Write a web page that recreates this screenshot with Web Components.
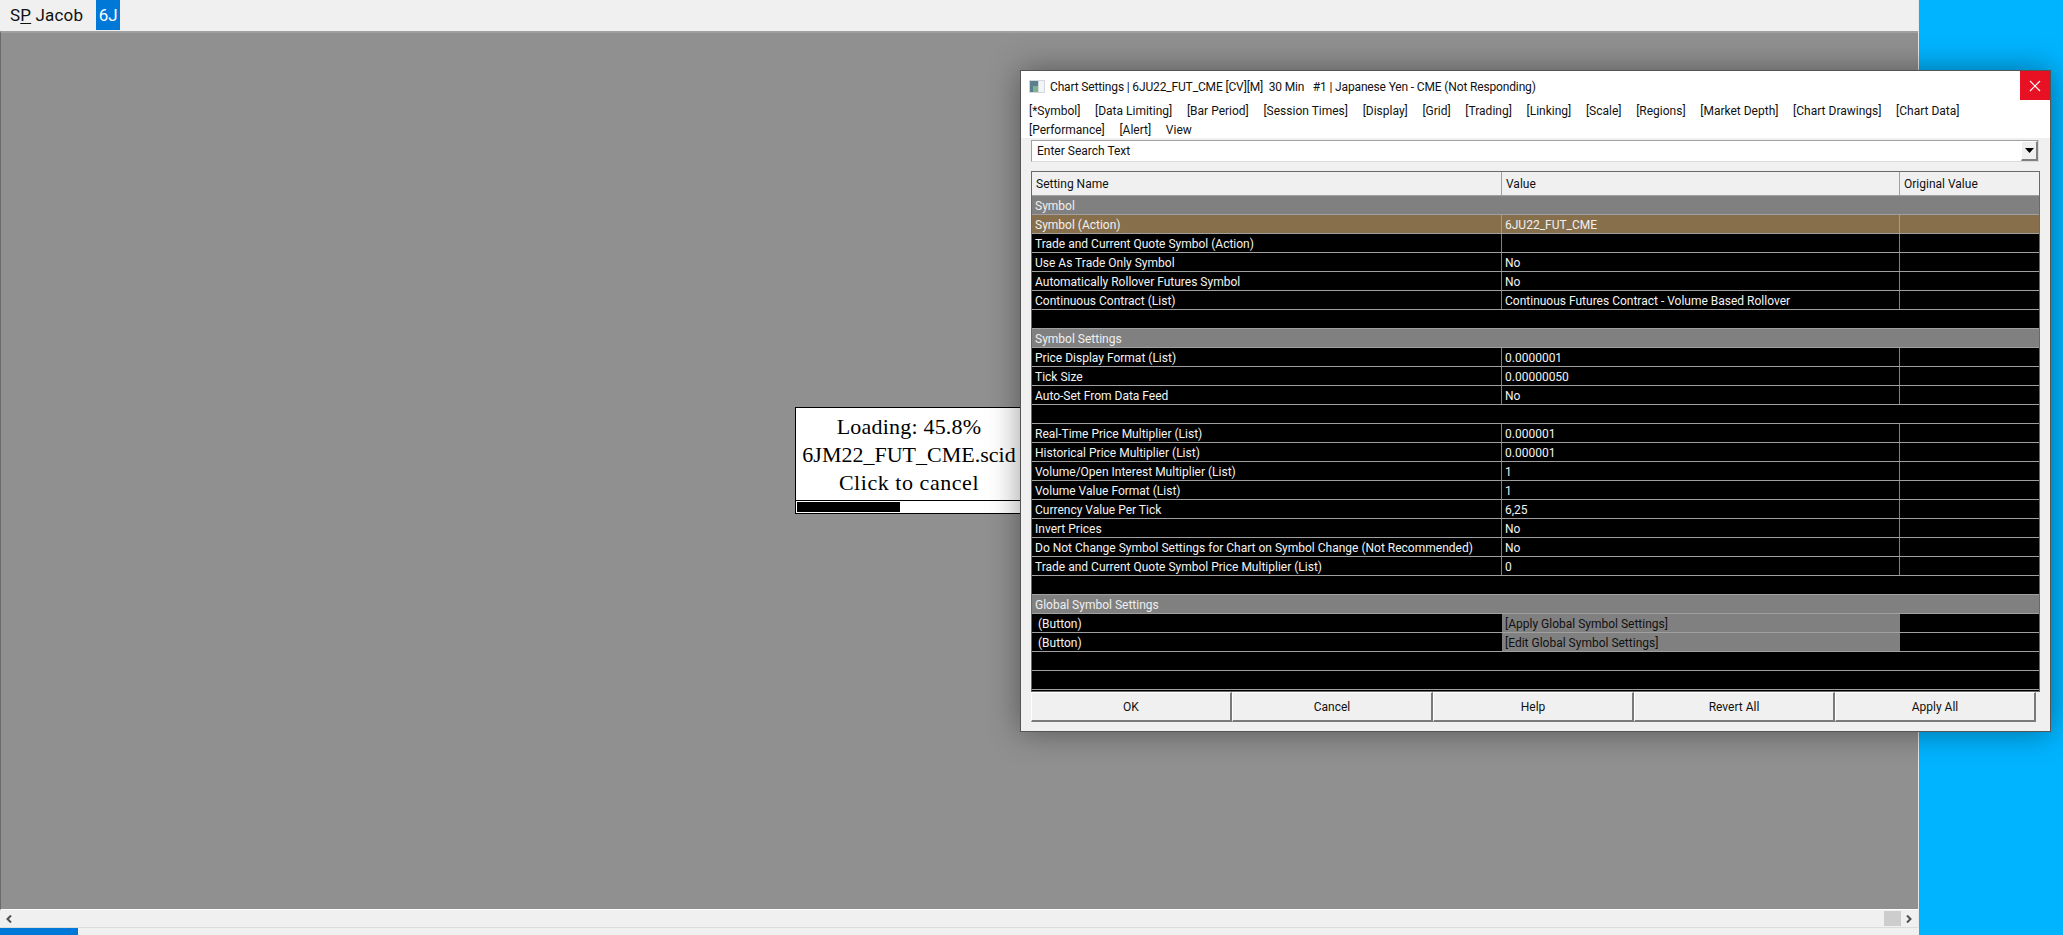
<!DOCTYPE html>
<html>
<head>
<meta charset="utf-8">
<title>Chart Settings</title>
<style>
  html, body { margin: 0; height: 100%; overflow: hidden; background: #00b4ff; }
  body { font-family: Roboto, sans-serif; font-size: 12px; }
</style>
</head>
<body>

<app-shell>
  <tab-bar slot="tabs"></tab-bar>
  <loading-box slot="windows" percent="45.8" file="6JM22_FUT_CME.scid"></loading-box>
  <chart-settings slot="windows"></chart-settings>
</app-shell>

<script>
// Desktop: main window on the left, blue wallpaper on the right, strip along the bottom.
class AppShell extends HTMLElement {
  constructor() {
    super();
    this.attachShadow({ mode: 'open' });
    this.shadowRoot.innerHTML = `
      <style>
        :host { display: block; position: relative; width: 2063px; height: 935px; overflow: hidden; background: #00b4ff; }
        .main { display: flex; flex-direction: column; width: 1919px; height: 928px; background: #f0f0f0; border-right: 1px solid #e8e8e8; box-sizing: border-box; }
        .chart { flex: 1; background: #909090; border-top: 2px solid #a0a0a0; border-left: 1px solid #6a6a6a; border-bottom: 1px solid #fff; }
        .scroll { display: flex; align-items: center; justify-content: space-between; height: 17px; padding: 0 5px; border-bottom: 1px solid #dcdcdc; }
        .thumb { width: 17px; height: 15px; background: #cdcdcd; margin-left: auto; margin-right: 4px; }
        .scroll svg { display: block; width: 8px; height: 8px; }
        .task { position: absolute; left: 0; right: 144px; bottom: 0; height: 7px; background: #f0f0f0; }
        .task i { display: block; width: 78px; height: 7px; background: #0078d7; }
      </style>
      <div class="main">
        <slot name="tabs"></slot>
        <div class="chart"></div>
        <div class="scroll">
          <svg viewBox="0 0 8 8"><path d="M6 0.5 L2.5 4 L6 7.5" fill="none" stroke="#505050" stroke-width="2"/></svg>
          <div class="thumb"></div>
          <svg viewBox="0 0 8 8"><path d="M2 0.5 L5.5 4 L2 7.5" fill="none" stroke="#505050" stroke-width="2"/></svg>
        </div>
      </div>
      <div class="task"><i></i></div>
      <slot name="windows"></slot>
    `;
  }
}

class TabBar extends HTMLElement {
  constructor() {
    super();
    this.attachShadow({ mode: 'open' });
    this.shadowRoot.innerHTML = `
      <style>
        :host { display: flex; height: 31px; background: #f0f0f0; font: 17px Roboto, sans-serif; color: #111; }
        .tab { display: flex; align-items: center; height: 30px; box-sizing: border-box; }
        .name { padding: 0 13px 0 10px; letter-spacing: .16px; }
        u { text-underline-offset: 2px; text-decoration-thickness: 1px; }
        .active { width: 24px; justify-content: center; background: #0078d7; color: #fff; }
      </style>
      <div class="tab name">S<u>P</u>&nbsp;Jacob</div>
      <div class="tab active">6J</div>
    `;
  }
}

// Small window over the chart, the settings dialog covers its right edge.
class LoadingBox extends HTMLElement {
  constructor() {
    super();
    this.attachShadow({ mode: 'open' });
  }
  connectedCallback() {
    const pct = this.getAttribute('percent');
    this.shadowRoot.innerHTML = `
      <style>
        :host { display: block; position: absolute; left: 795px; top: 407px; width: 228px; background: #fff; border: 1px solid #000; box-sizing: border-box; font: 22px/28px "Liberation Serif", serif; color: #000; text-align: center; }
        .text { padding: 5px 0 3px; }
        .l1 { letter-spacing: .2px; }
        .l3 { letter-spacing: .55px; }
        .bar { border-top: 1px solid #000; padding: 1px; height: 10px; }
        .bar div { height: 10px; width: ${pct}%; background: #000; }
      </style>
      <div class="text"><span class="l1">Loading: ${pct}%</span><br>${this.getAttribute('file')}<br><span class="l3">Click to cancel</span></div>
      <div class="bar"><div></div></div>
    `;
  }
}

class SettingsRow extends HTMLElement {
  constructor() {
    super();
    this.attachShadow({ mode: 'open' });
  }
  connectedCallback() {
    const name = this.getAttribute('name') || '';
    const value = this.getAttribute('value') || '';
    this.shadowRoot.innerHTML = `
      <style>
        :host { display: grid; grid-template-columns: 470px 398px 1fr; height: 19px; box-sizing: border-box; border-bottom: 1px solid #a0a0a0; background: #000; color: #f4f4f4; }
        div { height: 18px; line-height: 20px; white-space: pre; overflow: hidden; padding-left: 3px; border-right: 1px solid #808080; }
        .orig { border-right: 0; }
        :host([type=section]) { background: #808080; color: #efefef; }
        :host([type=section]) div { border-right-color: #808080; overflow: visible; }
        :host([type=selected]) { background: #886f4c; color: #f0f0f0; }
        :host([type=selected]) div { border-right-color: #a89a85; }
        :host([type=button]) .name { padding-left: 6px; border-right: 0; }
        :host([type=button]) .value { background: #808080; color: #111; border-right: 0; }
        :host([type=blank]) div { border-right-color: #000; }
      </style>
      <div class="name">${name}</div><div class="value">${value}</div><div class="orig"></div>
    `;
  }
}

class SettingsGrid extends HTMLElement {
  constructor() {
    super();
    this.attachShadow({ mode: 'open' });
    this.shadowRoot.innerHTML = `
      <style>
        :host { display: block; border: 1px solid #696969; border-bottom: 0; margin-top: 9px; }
        .head { display: grid; grid-template-columns: 470px 398px 1fr; height: 24px; background: #f0f0f0; color: #111; line-height: 25px; box-sizing: border-box; border-bottom: 1px solid #a0a0a0; }
        .head div { height: 23px; padding-left: 4px; border-right: 1px solid #a0a0a0; }
        .head div:last-child { border-right: 0; }
        .rows { background: #000; height: 495px; border-bottom: 1px solid #696969; overflow: hidden; }
      </style>
      <div class="head"><div>Setting Name</div><div>Value</div><div>Original Value</div></div>
      <div class="rows"><slot></slot></div>
    `;
  }
}

class DialogButton extends HTMLElement {
  constructor() {
    super();
    this.attachShadow({ mode: 'open' });
    this.shadowRoot.innerHTML = `
      <style>
        :host { display: flex; align-items: center; justify-content: center; flex: 1; box-sizing: border-box; height: 30px; background: #f0f0f0; color: #111; border: 1px solid #fff; border-right: 2px solid #7a7a7a; border-bottom: 2px solid #7a7a7a; }
      </style>
      <slot></slot>
    `;
  }
}

class ChartSettings extends HTMLElement {
  constructor() {
    super();
    this.attachShadow({ mode: 'open' });
    const tabs1 = ['[*Symbol]', '[Data Limiting]', '[Bar Period]', '[Session Times]', '[Display]', '[Grid]', '[Trading]', '[Linking]', '[Scale]', '[Regions]', '[Market Depth]', '[Chart Drawings]', '[Chart Data]'];
    const tabs2 = ['[Performance]', '[Alert]', 'View'];
    const span = t => `<span>${t}</span>`;
    this.shadowRoot.innerHTML = `
      <style>
        :host { display: flex; flex-direction: column; position: absolute; left: 1020px; top: 70px; width: 1031px; height: 662px; box-sizing: border-box; background: #f0f0f0; border: 1px solid #555; box-shadow: 0 0 30px rgba(0,0,0,.4); color: #111; font: 12px Roboto, sans-serif; }
        .top { background: #fff; height: 67px; flex: none; }
        .title { display: flex; align-items: center; height: 29px; box-sizing: border-box; padding: 2px 0 0 8px; position: relative; }
        .title svg { display: block; margin-right: 5px; }
        .title span { white-space: pre; letter-spacing: -.15px; }
        .close { position: absolute; right: 0; top: 0; width: 30px; height: 29px; background: #e81123; display: flex; align-items: center; justify-content: center; }
        .tabs { display: flex; gap: 14.67px; height: 19px; line-height: 19px; padding-left: 8px; white-space: pre; }
        .tabs.first { padding-top: 2px; }
        .body { padding: 2px 10px 0 10px; }
        .search { display: flex; align-items: center; justify-content: space-between; height: 22px; margin-right: 1px; box-sizing: border-box; background: #fff; border: 1px solid #dcdcdc; border-top: 1px solid #a0a0a0; border-left: 1px solid #a0a0a0; padding-left: 5px; }
        .drop { width: 17px; height: 20px; box-sizing: border-box; background: #f0f0f0; border: 1px solid #fff; border-right: 2px solid #808080; border-bottom: 2px solid #808080; display: flex; align-items: center; justify-content: center; }
        .buttons { display: flex; width: 1005px; }
      </style>
      <div class="top">
        <div class="title">
          <svg width="16" height="13" viewBox="0 0 16 13">
            <rect x="0" y="0" width="16" height="13" fill="#d4d8dc"/>
            <rect x="1" y="1" width="8" height="11" fill="#5a7f8f"/>
            <rect x="4" y="6" width="5" height="6" fill="#7fb08f"/>
            <rect x="10" y="1" width="5" height="11" fill="#f2f4f6"/>
          </svg>
          <span>Chart Settings | 6JU22_FUT_CME [CV][M]  30 Min   #1 | Japanese Yen - CME (Not Responding)</span>
          <div class="close">
            <svg width="12" height="12" viewBox="0 0 12 12" style="margin:0"><path d="M1 1 L11 11 M11 1 L1 11" stroke="#fff" stroke-width="1.2" fill="none"/></svg>
          </div>
        </div>
        <div class="tabs first">${tabs1.map(span).join('')}</div>
        <div class="tabs">${tabs2.map(span).join('')}</div>
      </div>
      <div class="body">
        <div class="search">
          <span>Enter Search Text</span>
          <div class="drop"><svg width="9" height="5" viewBox="0 0 9 5"><path d="M0 0 H9 L4.5 5 Z" fill="#000"/></svg></div>
        </div>
        <slot></slot>
        <div class="buttons">
          <dialog-button>OK</dialog-button>
          <dialog-button>Cancel</dialog-button>
          <dialog-button>Help</dialog-button>
          <dialog-button>Revert All</dialog-button>
          <dialog-button>Apply All</dialog-button>
        </div>
      </div>
    `;
  }
  connectedCallback() {
    if (this.children.length) return;
    const rows = [
      ['Symbol', '', 'section'],
      ['Symbol (Action)', '6JU22_FUT_CME', 'selected'],
      ['Trade and Current Quote Symbol (Action)', ''],
      ['Use As Trade Only Symbol', 'No'],
      ['Automatically Rollover Futures Symbol', 'No'],
      ['Continuous Contract (List)', 'Continuous Futures Contract - Volume Based Rollover'],
      ['', '', 'blank'],
      ['Symbol Settings', '', 'section'],
      ['Price Display Format (List)', '0.0000001'],
      ['Tick Size', '0.00000050'],
      ['Auto-Set From Data Feed', 'No'],
      ['', '', 'blank'],
      ['Real-Time Price Multiplier (List)', '0.000001'],
      ['Historical Price Multiplier (List)', '0.000001'],
      ['Volume/Open Interest Multiplier (List)', '1'],
      ['Volume Value Format (List)', '1'],
      ['Currency Value Per Tick', '6,25'],
      ['Invert Prices', 'No'],
      ['Do Not Change Symbol Settings for Chart on Symbol Change (Not Recommended)', 'No'],
      ['Trade and Current Quote Symbol Price Multiplier (List)', '0'],
      ['', '', 'blank'],
      ['Global Symbol Settings', '', 'section'],
      ['(Button)', '[Apply Global Symbol Settings]', 'button'],
      ['(Button)', '[Edit Global Symbol Settings]', 'button'],
      ['', '', 'blank'],
      ['', '', 'blank']
    ];
    const grid = document.createElement('settings-grid');
    rows.forEach(([name, value, type]) => {
      const row = document.createElement('settings-row');
      row.setAttribute('name', name);
      row.setAttribute('value', value);
      if (type) row.setAttribute('type', type);
      grid.appendChild(row);
    });
    this.appendChild(grid);
  }
}

customElements.define('app-shell', AppShell);
customElements.define('tab-bar', TabBar);
customElements.define('loading-box', LoadingBox);
customElements.define('settings-row', SettingsRow);
customElements.define('settings-grid', SettingsGrid);
customElements.define('dialog-button', DialogButton);
customElements.define('chart-settings', ChartSettings);
</script>
</body>
</html>
